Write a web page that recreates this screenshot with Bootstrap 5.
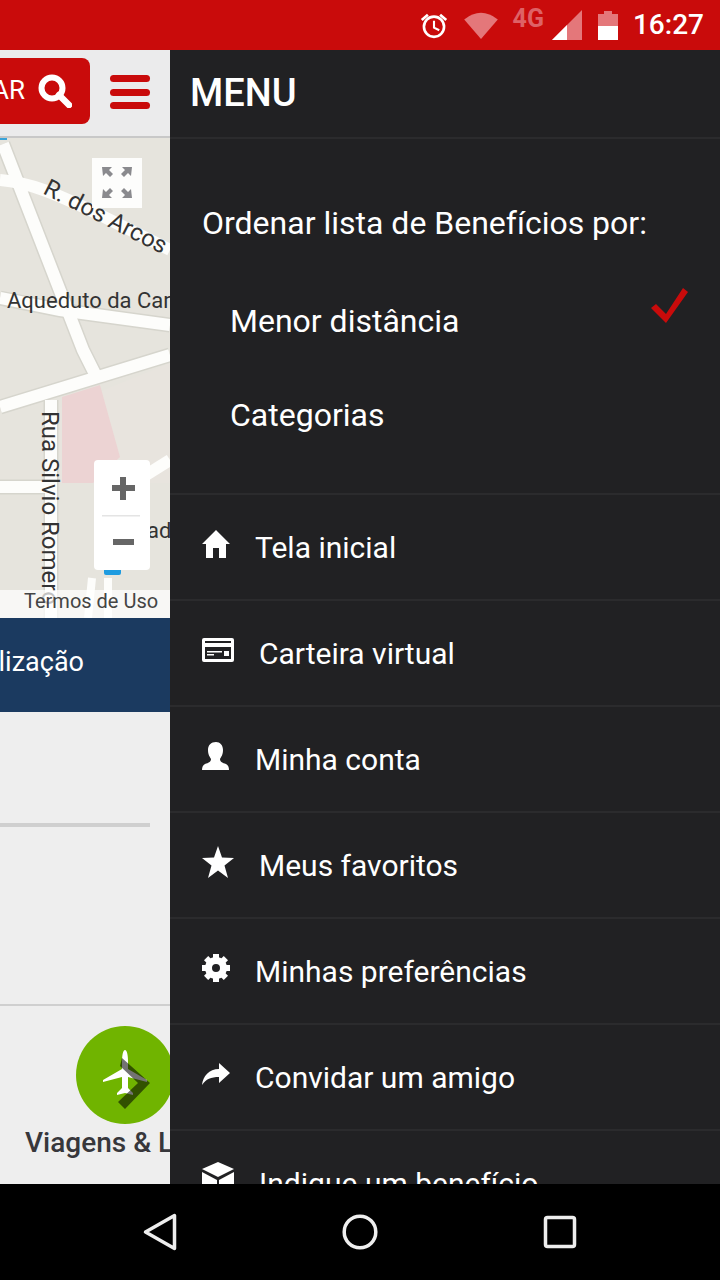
<!DOCTYPE html>
<html lang="pt-br">
<head>
  <meta charset="UTF-8">
  <meta name="viewport" content="width=device-width, initial-scale=1.0">
  <title>Menu</title>
  <link href="https://cdn.jsdelivr.net/npm/bootstrap@5.3.0/dist/css/bootstrap.min.css" rel="stylesheet">
  <style>
    html, body { width: 720px; height: 1280px; overflow: hidden; }
    body { font-family: Roboto, sans-serif; background: #000; }
    .phone { width: 720px; height: 1280px; }

    .status-bar { height: 50px; background: #c90b0b; padding-right: 16px; }
    .status-time { color: #fff; font-size: 28px; font-weight: 500; line-height: 54px; margin-left: 15px; }
    .status-4g { color: #de6266; font-size: 25px; font-weight: 700; line-height: 38px; margin: 0 8px 0 15px; }

    .screen { height: 1134px; }
    .behind { width: 170px; background: #eeeeee; }
    .top-strip { height: 88px; background: #ebebec; border-bottom: 2px solid #c8c8c8; padding: 8px 20px 13px 0; }
    .search-btn { width: 130px; height: 66px; margin-left: -40px; background: #c90b0b; border-radius: 8px; color: #fff; font-size: 26px; padding-right: 18px; gap: 13px; }
    .burger-stack { gap: 6.500px; margin-top: 3px; }
    .burger-line { width: 40px; height: 7px; background: #c90b0b; border-radius: 4px; }
    .map-area { height: 480px; }
    .map-area svg { display: block; }
    .map-road-text { font-family: Roboto, sans-serif; font-size: 22px; fill: #333; }
    .map-road-large { font-size: 24px; }
    .blue-bar { height: 94px; background: #1b3a60; color: #fff; font-size: 27px; padding: 0 86px 6px 0; white-space: nowrap; }
    .gap-one { height: 111px; }
    .rule-one { height: 4px; background: #cfcfcf; width: 150px; }
    .gap-two { height: 177px; }
    .rule-two { height: 2px; background: #cfcfcf; }
    .category { height: 178px; }
    .cat-circle { width: 98px; height: 98px; background: #70b400; border-radius: 50%; left: 76px; top: 20px; }
    .cat-glyph { left: 96px; top: 38px; }
    .cat-label { left: 25px; top: 116px; font-size: 28px; font-weight: 500; color: #37373b; white-space: nowrap; }

    .drawer { width: 550px; background: #212123; color: #fff; }
    .drawer-head { height: 89px; border-bottom: 2px solid #2b2b2d; padding-left: 20px; font-size: 38px; font-weight: 500; }
    .sort-block { height: 356px; border-bottom: 2px solid #2b2b2d; padding-left: 32px; font-size: 32px; position: relative; }
    .sort-title { height: 50px; margin-top: 59px; line-height: 50px; }
    .sort-option { height: 50px; line-height: 50px; padding-left: 28px; }
    .sort-title + .sort-option { margin-top: 48px; }
    .sort-option + .sort-option { margin-top: 44px; }
    .sort-check { position: absolute; right: 30px; top: 148px; }
    .menu-row { height: 106px; border-bottom: 2px solid #2b2b2d; font-size: 30px; padding-left: 32px; }
    .menu-icon { width: 33px; margin-top: -6px; }
    .nav-bar { height: 96px; background: #000; padding: 0 143px; }
  </style>
</head>
<body>
<div class="phone d-flex flex-column">

  <!-- status bar -->
  <div class="status-bar d-flex justify-content-end align-items-center flex-shrink-0">
    <svg class="me-3" width="28" height="28" viewBox="0 0 32 32">
      <circle cx="16" cy="18" r="11.5" fill="none" stroke="#fff" stroke-width="3"/>
      <path d="M16 11v8l6 3" fill="none" stroke="#fff" stroke-width="2.400"/>
      <path d="M1 9l7-6 2 2.500-7 6zM31 9l-7-6-2 2.500 7 6z" fill="#fff"/>
    </svg>
    <svg width="34" height="28" viewBox="0 0 36 30"><path d="M0 9Q18-5 36 9L18 30z" fill="#e4777a"/></svg>
    <span class="status-4g align-self-start">4G</span>
    <svg width="30" height="30" viewBox="0 0 30 30">
      <path d="M0 30L30 0v30z" fill="#e4777a"/><path d="M0 30L15 15v15z" fill="#fff"/>
    </svg>
    <svg class="ms-3" width="20" height="29" viewBox="0 0 20 29">
      <path d="M0 3h6V0h8v3h6v12H0z" fill="#e4777a"/><path d="M0 15h20v14H0z" fill="#fff"/>
    </svg>
    <span class="status-time">16:27</span>
  </div>

  <div class="screen d-flex">
    <!-- page behind the drawer -->
    <div class="behind overflow-hidden flex-shrink-0">
      <div class="top-strip d-flex justify-content-between align-items-center">
        <div class="search-btn d-flex align-items-center justify-content-end">
          <span>AR</span>
          <svg width="34" height="34" viewBox="0 0 34 34">
            <circle cx="14" cy="14" r="10.500" fill="none" stroke="#fff" stroke-width="6"/>
            <path d="M21 21l10 10" stroke="#fff" stroke-width="6.500" stroke-linecap="round"/>
          </svg>
        </div>
        <div class="burger-stack d-flex flex-column">
          <div class="burger-line"></div>
          <div class="burger-line"></div>
          <div class="burger-line"></div>
        </div>
      </div>

      <div class="map-area position-relative">
        <svg width="170" height="480" viewBox="0 0 170 480">
          <rect width="170" height="480" fill="#e6e4dd"/>
          <path d="M60 270L170 225V345H60z" fill="#e8e4de"/>
          <path d="M62 259L100 247 120 319 93 345H62z" fill="#ecd3d3"/>
          <g fill="none" stroke="#d6d5cd" stroke-width="15">
            <path d="M3 6L83 212 97 240"/>
            <path d="M0 160L60 172 170 187"/>
            <path d="M0 269L170 217"/>
            <path d="M0 349H51"/>
            <path d="M51 262V480"/>
          </g>
          <g fill="none" stroke="#fdfdfb" stroke-width="12">
            <path d="M3 6L83 212 97 240"/>
            <path d="M0 42C30 44 60 58 90 72L170 112"/>
            <path d="M0 160L60 172 170 187"/>
            <path d="M0 269L170 217"/>
            <path d="M0 349H51"/>
            <path d="M51 262V480"/>
            <path d="M146 337L170 322"/>
            <path d="M92 440L88 480" stroke-width="8"/>
            <path d="M108 440V480" stroke-width="8"/>
          </g>
          <rect x="0" y="0" width="7" height="2" fill="#3aa3d8"/>
          <text class="map-road-text map-road-large" transform="translate(42 55) rotate(27)">R. dos Arcos</text>
          <text class="map-road-text" x="7" y="170">Aqueduto da Carioca</text>
          <text class="map-road-text map-road-large" transform="translate(42 273) rotate(90)">Rua Silvio Romero</text>
          <text class="map-road-text" x="147" y="400">ada</text>
          <rect x="104" y="430" width="17" height="7" rx="2" fill="#1e9be0"/>
          <rect y="452" width="170" height="28" fill="#fff" fill-opacity=".7"/>
          <text x="24" y="470" font-size="20" fill="#444" style="font-family:Roboto,sans-serif">Termos de Uso</text>

          <rect x="92" y="20" width="50" height="50" fill="#fff" fill-opacity=".9"/>
          <g fill="#8a8a8e">
            <path d="M102 29h10l-3 3 4 4-3 3-4-4-3 3z"/>
            <path d="M132 29h-10l3 3-4 4 3 3 4-4 3 3z"/>
            <path d="M102 60h10l-3-3 4-4-3-3-4 4-3-3z"/>
            <path d="M132 60h-10l3-3-4-4 3-3 4 4 3-3z"/>
          </g>

          <rect x="94" y="322" width="56" height="110" rx="4" fill="#fff"/>
          <rect x="102" y="377" width="38" height="1.500" fill="#e4e4e4"/>
          <path d="M120 339h6v8h9v6h-9v9h-6v-9h-8v-6h8z" fill="#666"/>
          <rect x="113" y="401" width="21" height="6" fill="#666"/>
        </svg>
      </div>

      <div class="blue-bar d-flex justify-content-end align-items-center">Atualização</div>
      <div class="gap-one"></div>
      <div class="rule-one"></div>
      <div class="gap-two"></div>
      <div class="rule-two"></div>
      <div class="category position-relative">
        <div class="cat-circle position-absolute"></div>
        <svg class="cat-glyph position-absolute" width="60" height="68" viewBox="0 0 60 68">
          <path d="M29 6c2 0 3 5 3 12v7l19 11v2l-19-5v11l5 5v2l-8-2-8 2v-2l5-5V33L7 38v-2l19-11v-7c0-7 1-12 3-12z" fill="#fff"/>
          <path d="M26 14l28 25-25 26-7-7 20-19-18-17z" fill="#000" fill-opacity=".55"/>
        </svg>
        <div class="cat-label position-absolute">Viagens &amp; Lazer</div>
      </div>
    </div>

    <!-- drawer -->
    <div class="drawer overflow-hidden d-flex flex-column flex-grow-1">
      <div class="drawer-head d-flex align-items-center flex-shrink-0">MENU</div>
      <div class="sort-block flex-shrink-0">
        <div class="sort-title">Ordenar lista de Benefícios por:</div>
        <div class="sort-option">Menor distância</div>
        <div class="sort-option">Categorias</div>
        <svg class="sort-check" width="40" height="38" viewBox="0 0 40 38">
          <path d="M1 21l5-4 10 10L33 1l5 4-22 31z" fill="#c90b0b"/>
        </svg>
      </div>

      <div class="menu-row d-flex align-items-center flex-shrink-0">
        <svg class="menu-icon me-3" height="28" viewBox="0 0 33 28" preserveAspectRatio="xMinYMid">
          <path d="M14 0L0 14h4v14h7v-10h6v10h7V14h4z" fill="#fff"/>
        </svg>
        <span class="ms-1">Tela inicial</span>
      </div>
      <div class="menu-row d-flex align-items-center flex-shrink-0">
        <svg class="menu-icon me-3" height="24" viewBox="0 0 33 24" preserveAspectRatio="xMinYMid">
          <path fill-rule="evenodd" d="M2 0h28a2 2 0 0 1 2 2v20a2 2 0 0 1-2 2H2a2 2 0 0 1-2-2V2a2 2 0 0 1 2-2zM3 3v2h26V3zM3 9v12h26V9z" fill="#fff"/>
          <path d="M5 13h15v1.500H5zM5 16h7v1.500H5zM22 13h5v5h-5z" fill="#fff"/>
        </svg>
        <span class="ms-2">Carteira virtual</span>
      </div>
      <div class="menu-row d-flex align-items-center flex-shrink-0">
        <svg class="menu-icon me-3" height="28" viewBox="0 0 33 28" preserveAspectRatio="xMinYMid">
          <path d="M14 0c4 0 7 3 7 8s-2 7-3 9c0 3 3 4 6 5 2 1 3 3 3 6H0c0-3 1-5 3-6 3-1 6-2 6-5-1-2-3-4-3-9s3-8 8-8z" fill="#fff"/>
        </svg>
        <span class="ms-1">Minha conta</span>
      </div>
      <div class="menu-row d-flex align-items-center flex-shrink-0">
        <svg class="menu-icon me-3" height="32" viewBox="0 0 33 32" preserveAspectRatio="xMinYMid">
          <path d="M16 0l4 11.500 12 .5-9.500 7.500L26 32 16 24.500 6 32l3.500-12.500L0 12l12-.5z" fill="#fff"/>
        </svg>
        <span class="ms-2">Meus favoritos</span>
      </div>
      <div class="menu-row d-flex align-items-center flex-shrink-0">
        <svg class="menu-icon me-3" height="28" viewBox="0 0 33 28" preserveAspectRatio="xMinYMid">
          <circle cx="14" cy="14" r="7.500" fill="none" stroke="#fff" stroke-width="7"/>
          <g fill="#fff">
            <rect x="11" y="0" width="6" height="6"/>
            <rect x="11" y="0" width="6" height="6" transform="rotate(45 14 14)"/>
            <rect x="11" y="0" width="6" height="6" transform="rotate(90 14 14)"/>
            <rect x="11" y="0" width="6" height="6" transform="rotate(135 14 14)"/>
            <rect x="11" y="0" width="6" height="6" transform="rotate(180 14 14)"/>
            <rect x="11" y="0" width="6" height="6" transform="rotate(225 14 14)"/>
            <rect x="11" y="0" width="6" height="6" transform="rotate(270 14 14)"/>
            <rect x="11" y="0" width="6" height="6" transform="rotate(315 14 14)"/>
          </g>
        </svg>
        <span class="ms-1">Minhas preferências</span>
      </div>
      <div class="menu-row d-flex align-items-center flex-shrink-0">
        <svg class="menu-icon me-3" height="22" viewBox="0 0 33 22" preserveAspectRatio="xMinYMid">
          <path d="M17 0l11 10-11 10v-6C9 14 4 16 0 22 1 13 7 6 17 6z" fill="#fff"/>
        </svg>
        <span class="ms-1">Convidar um amigo</span>
      </div>
      <div class="menu-row d-flex align-items-center flex-shrink-0">
        <svg class="menu-icon me-3" height="36" viewBox="0 0 33 36" preserveAspectRatio="xMinYMid">
          <path d="M16 0l16 7-16 8L0 7zM0 10l15 8v18L0 29zM32 10l-15 8v18l15-7z" fill="#fff"/>
        </svg>
        <span class="ms-2">Indique um benefício</span>
      </div>
    </div>
  </div>

  <!-- android nav bar -->
  <div class="nav-bar d-flex justify-content-between align-items-center flex-shrink-0">
    <svg width="34" height="38" viewBox="0 0 34 38"><path d="M31.500 2.500v33L2.500 19z" fill="none" stroke="#eee" stroke-width="3.500" stroke-linejoin="round"/></svg>
    <svg width="36" height="36" viewBox="0 0 36 36"><circle cx="18" cy="18" r="15.800" fill="none" stroke="#eee" stroke-width="3.500"/></svg>
    <svg width="34" height="34" viewBox="0 0 34 34"><rect x="2.500" y="2.500" width="29" height="29" rx="2" fill="none" stroke="#eee" stroke-width="3.500"/></svg>
  </div>
</div>
</body>
</html>
